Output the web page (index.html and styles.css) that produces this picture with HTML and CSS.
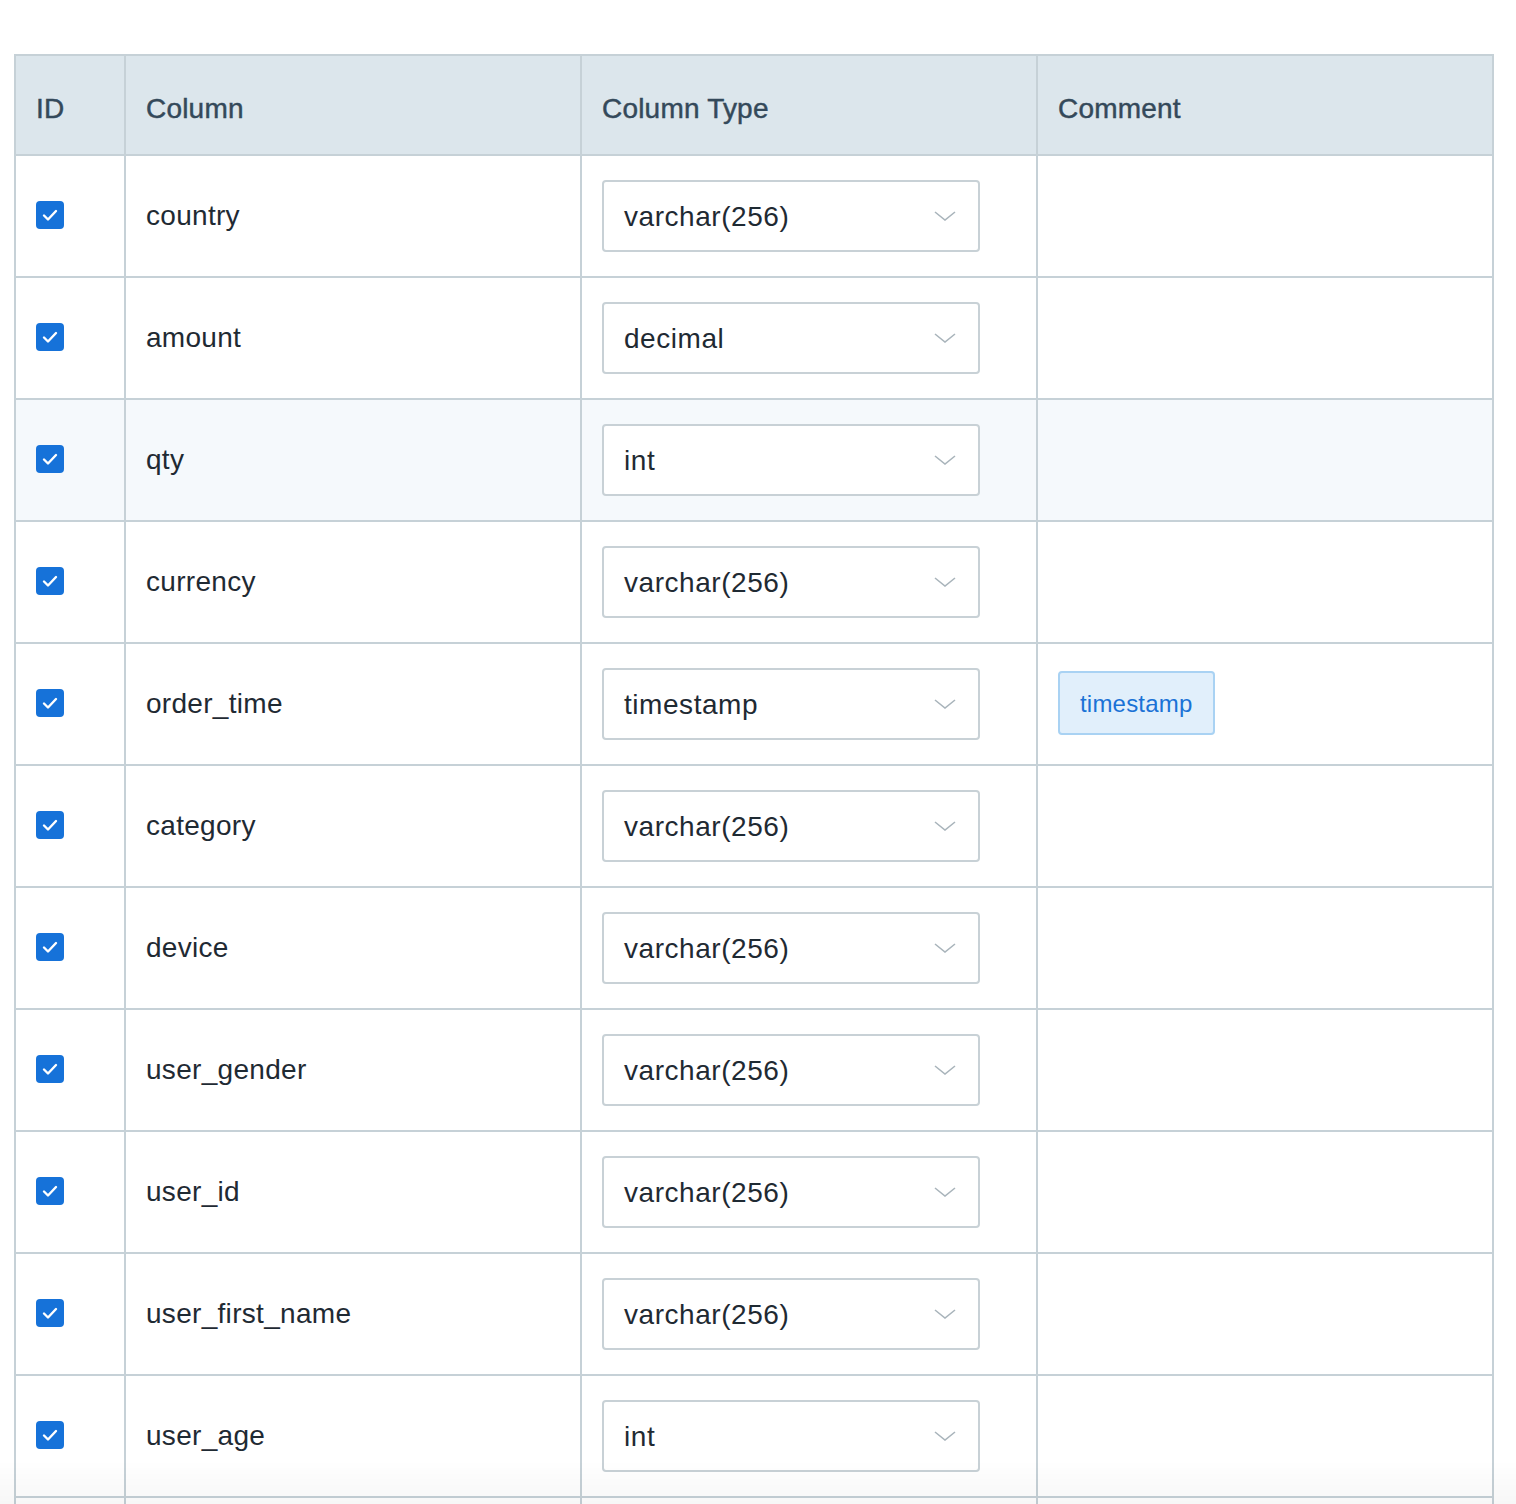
FILE: index.html
```html
<!DOCTYPE html>
<html lang="en">
<head>
<meta charset="utf-8">
<title>Columns</title>
<link rel="stylesheet" href="styles.css">
</head>
<body>
<div class="page">
<table class="cols">
  <thead>
    <tr>
      <th class="c-id">ID</th>
      <th class="c-col">Column</th>
      <th class="c-type">Column Type</th>
      <th class="c-comment">Comment</th>
    </tr>
  </thead>
  <tbody>
    <tr>
      <td class="c-id"><span class="cb"><svg viewBox="0 0 28 28"><path d="M8 14.5l4 4 8-8.5"/></svg></span></td>
      <td class="c-col">country</td>
      <td class="c-type"><div class="sel"><span>varchar(256)</span><svg class="chev" viewBox="0 0 22 10"><path d="M1 1l10 8 10-8"/></svg></div></td>
      <td class="c-comment"></td>
    </tr>
    <tr>
      <td class="c-id"><span class="cb"><svg viewBox="0 0 28 28"><path d="M8 14.5l4 4 8-8.5"/></svg></span></td>
      <td class="c-col">amount</td>
      <td class="c-type"><div class="sel"><span>decimal</span><svg class="chev" viewBox="0 0 22 10"><path d="M1 1l10 8 10-8"/></svg></div></td>
      <td class="c-comment"></td>
    </tr>
    <tr class="hover">
      <td class="c-id"><span class="cb"><svg viewBox="0 0 28 28"><path d="M8 14.5l4 4 8-8.5"/></svg></span></td>
      <td class="c-col">qty</td>
      <td class="c-type"><div class="sel"><span>int</span><svg class="chev" viewBox="0 0 22 10"><path d="M1 1l10 8 10-8"/></svg></div></td>
      <td class="c-comment"></td>
    </tr>
    <tr>
      <td class="c-id"><span class="cb"><svg viewBox="0 0 28 28"><path d="M8 14.5l4 4 8-8.5"/></svg></span></td>
      <td class="c-col">currency</td>
      <td class="c-type"><div class="sel"><span>varchar(256)</span><svg class="chev" viewBox="0 0 22 10"><path d="M1 1l10 8 10-8"/></svg></div></td>
      <td class="c-comment"></td>
    </tr>
    <tr>
      <td class="c-id"><span class="cb"><svg viewBox="0 0 28 28"><path d="M8 14.5l4 4 8-8.5"/></svg></span></td>
      <td class="c-col">order_time</td>
      <td class="c-type"><div class="sel"><span>timestamp</span><svg class="chev" viewBox="0 0 22 10"><path d="M1 1l10 8 10-8"/></svg></div></td>
      <td class="c-comment"><span class="tag">timestamp</span></td>
    </tr>
    <tr>
      <td class="c-id"><span class="cb"><svg viewBox="0 0 28 28"><path d="M8 14.5l4 4 8-8.5"/></svg></span></td>
      <td class="c-col">category</td>
      <td class="c-type"><div class="sel"><span>varchar(256)</span><svg class="chev" viewBox="0 0 22 10"><path d="M1 1l10 8 10-8"/></svg></div></td>
      <td class="c-comment"></td>
    </tr>
    <tr>
      <td class="c-id"><span class="cb"><svg viewBox="0 0 28 28"><path d="M8 14.5l4 4 8-8.5"/></svg></span></td>
      <td class="c-col">device</td>
      <td class="c-type"><div class="sel"><span>varchar(256)</span><svg class="chev" viewBox="0 0 22 10"><path d="M1 1l10 8 10-8"/></svg></div></td>
      <td class="c-comment"></td>
    </tr>
    <tr>
      <td class="c-id"><span class="cb"><svg viewBox="0 0 28 28"><path d="M8 14.5l4 4 8-8.5"/></svg></span></td>
      <td class="c-col">user_gender</td>
      <td class="c-type"><div class="sel"><span>varchar(256)</span><svg class="chev" viewBox="0 0 22 10"><path d="M1 1l10 8 10-8"/></svg></div></td>
      <td class="c-comment"></td>
    </tr>
    <tr>
      <td class="c-id"><span class="cb"><svg viewBox="0 0 28 28"><path d="M8 14.5l4 4 8-8.5"/></svg></span></td>
      <td class="c-col">user_id</td>
      <td class="c-type"><div class="sel"><span>varchar(256)</span><svg class="chev" viewBox="0 0 22 10"><path d="M1 1l10 8 10-8"/></svg></div></td>
      <td class="c-comment"></td>
    </tr>
    <tr>
      <td class="c-id"><span class="cb"><svg viewBox="0 0 28 28"><path d="M8 14.5l4 4 8-8.5"/></svg></span></td>
      <td class="c-col">user_first_name</td>
      <td class="c-type"><div class="sel"><span>varchar(256)</span><svg class="chev" viewBox="0 0 22 10"><path d="M1 1l10 8 10-8"/></svg></div></td>
      <td class="c-comment"></td>
    </tr>
    <tr>
      <td class="c-id"><span class="cb"><svg viewBox="0 0 28 28"><path d="M8 14.5l4 4 8-8.5"/></svg></span></td>
      <td class="c-col">user_age</td>
      <td class="c-type"><div class="sel"><span>int</span><svg class="chev" viewBox="0 0 22 10"><path d="M1 1l10 8 10-8"/></svg></div></td>
      <td class="c-comment"></td>
    </tr>
    <tr>
      <td class="c-id"></td>
      <td class="c-col"></td>
      <td class="c-type"></td>
      <td class="c-comment"></td>
    </tr>
  </tbody>
</table>
</div>
<div class="fade"></div>
</body>
</html>
```

FILE: styles.css
```css
html, body {
  margin: 0;
  padding: 0;
  background: #ffffff;
}

body {
  font-family: "Liberation Sans", Arial, sans-serif;
  color: #1f2a33;
}

.page {
  padding: 54px 0 0 14px;
}

.cols {
  table-layout: fixed;
  border-collapse: separate;
  border-spacing: 0;
  width: 1480px;
  border-top: 2px solid #c6d1d7;
  border-left: 2px solid #c6d1d7;
}

.cols th,
.cols td {
  box-sizing: border-box;
  border-right: 2px solid #c6d1d7;
  border-bottom: 2px solid #c6d1d7;
  padding: 0 20px;
  text-align: left;
  vertical-align: middle;
}

.cols th {
  height: 100px;
  background: #dce6ec;
  color: #34495a;
  font-size: 28px;
  font-weight: 400;
  -webkit-text-stroke: 0.45px #34495a;
  letter-spacing: 0.2px;
  padding-top: 7px;
}

.cols td {
  height: 122px;
  font-size: 28px;
  color: #1f2a33;
  letter-spacing: 0.3px;
}

.c-id { width: 110px; }
.c-col { width: 456px; }
.c-type { width: 456px; }
.c-comment { width: 456px; }

.cols tr.hover td {
  background: #f5f9fc;
}

.cb {
  display: block;
  width: 28px;
  height: 28px;
  border-radius: 4px;
  background: #1672d9;
  margin-top: -2px;
}

.cb svg {
  display: block;
  width: 28px;
  height: 28px;
  fill: none;
  stroke: #ffffff;
  stroke-width: 2.4;
  stroke-linecap: round;
  stroke-linejoin: round;
}

.sel {
  box-sizing: border-box;
  width: 378px;
  height: 72px;
  border: 2px solid #c8d1d6;
  border-radius: 4px;
  background: #ffffff;
  display: flex;
  align-items: center;
  justify-content: space-between;
  padding: 0 22px 0 20px;
  font-size: 28px;
  color: #1f2a33;
  letter-spacing: 0.55px;
}

.sel span {
  padding-top: 1px;
}

.chev {
  width: 22px;
  height: 10px;
  fill: none;
  stroke: #a9b4bb;
  stroke-width: 1.6;
}

.tag {
  display: inline-block;
  box-sizing: border-box;
  height: 64px;
  line-height: 62px;
  padding: 0 20px;
  border: 2px solid #a9d2f3;
  border-radius: 4px;
  background: #e1effb;
  color: #1a72d6;
  font-size: 24px;
  letter-spacing: 0.2px;
  margin-top: -2px;
}

.fade {
  position: fixed;
  left: 0;
  right: 0;
  bottom: 0;
  height: 44px;
  background: linear-gradient(to bottom, rgba(0, 0, 0, 0), rgba(0, 0, 0, 0.03));
  pointer-events: none;
}
```
